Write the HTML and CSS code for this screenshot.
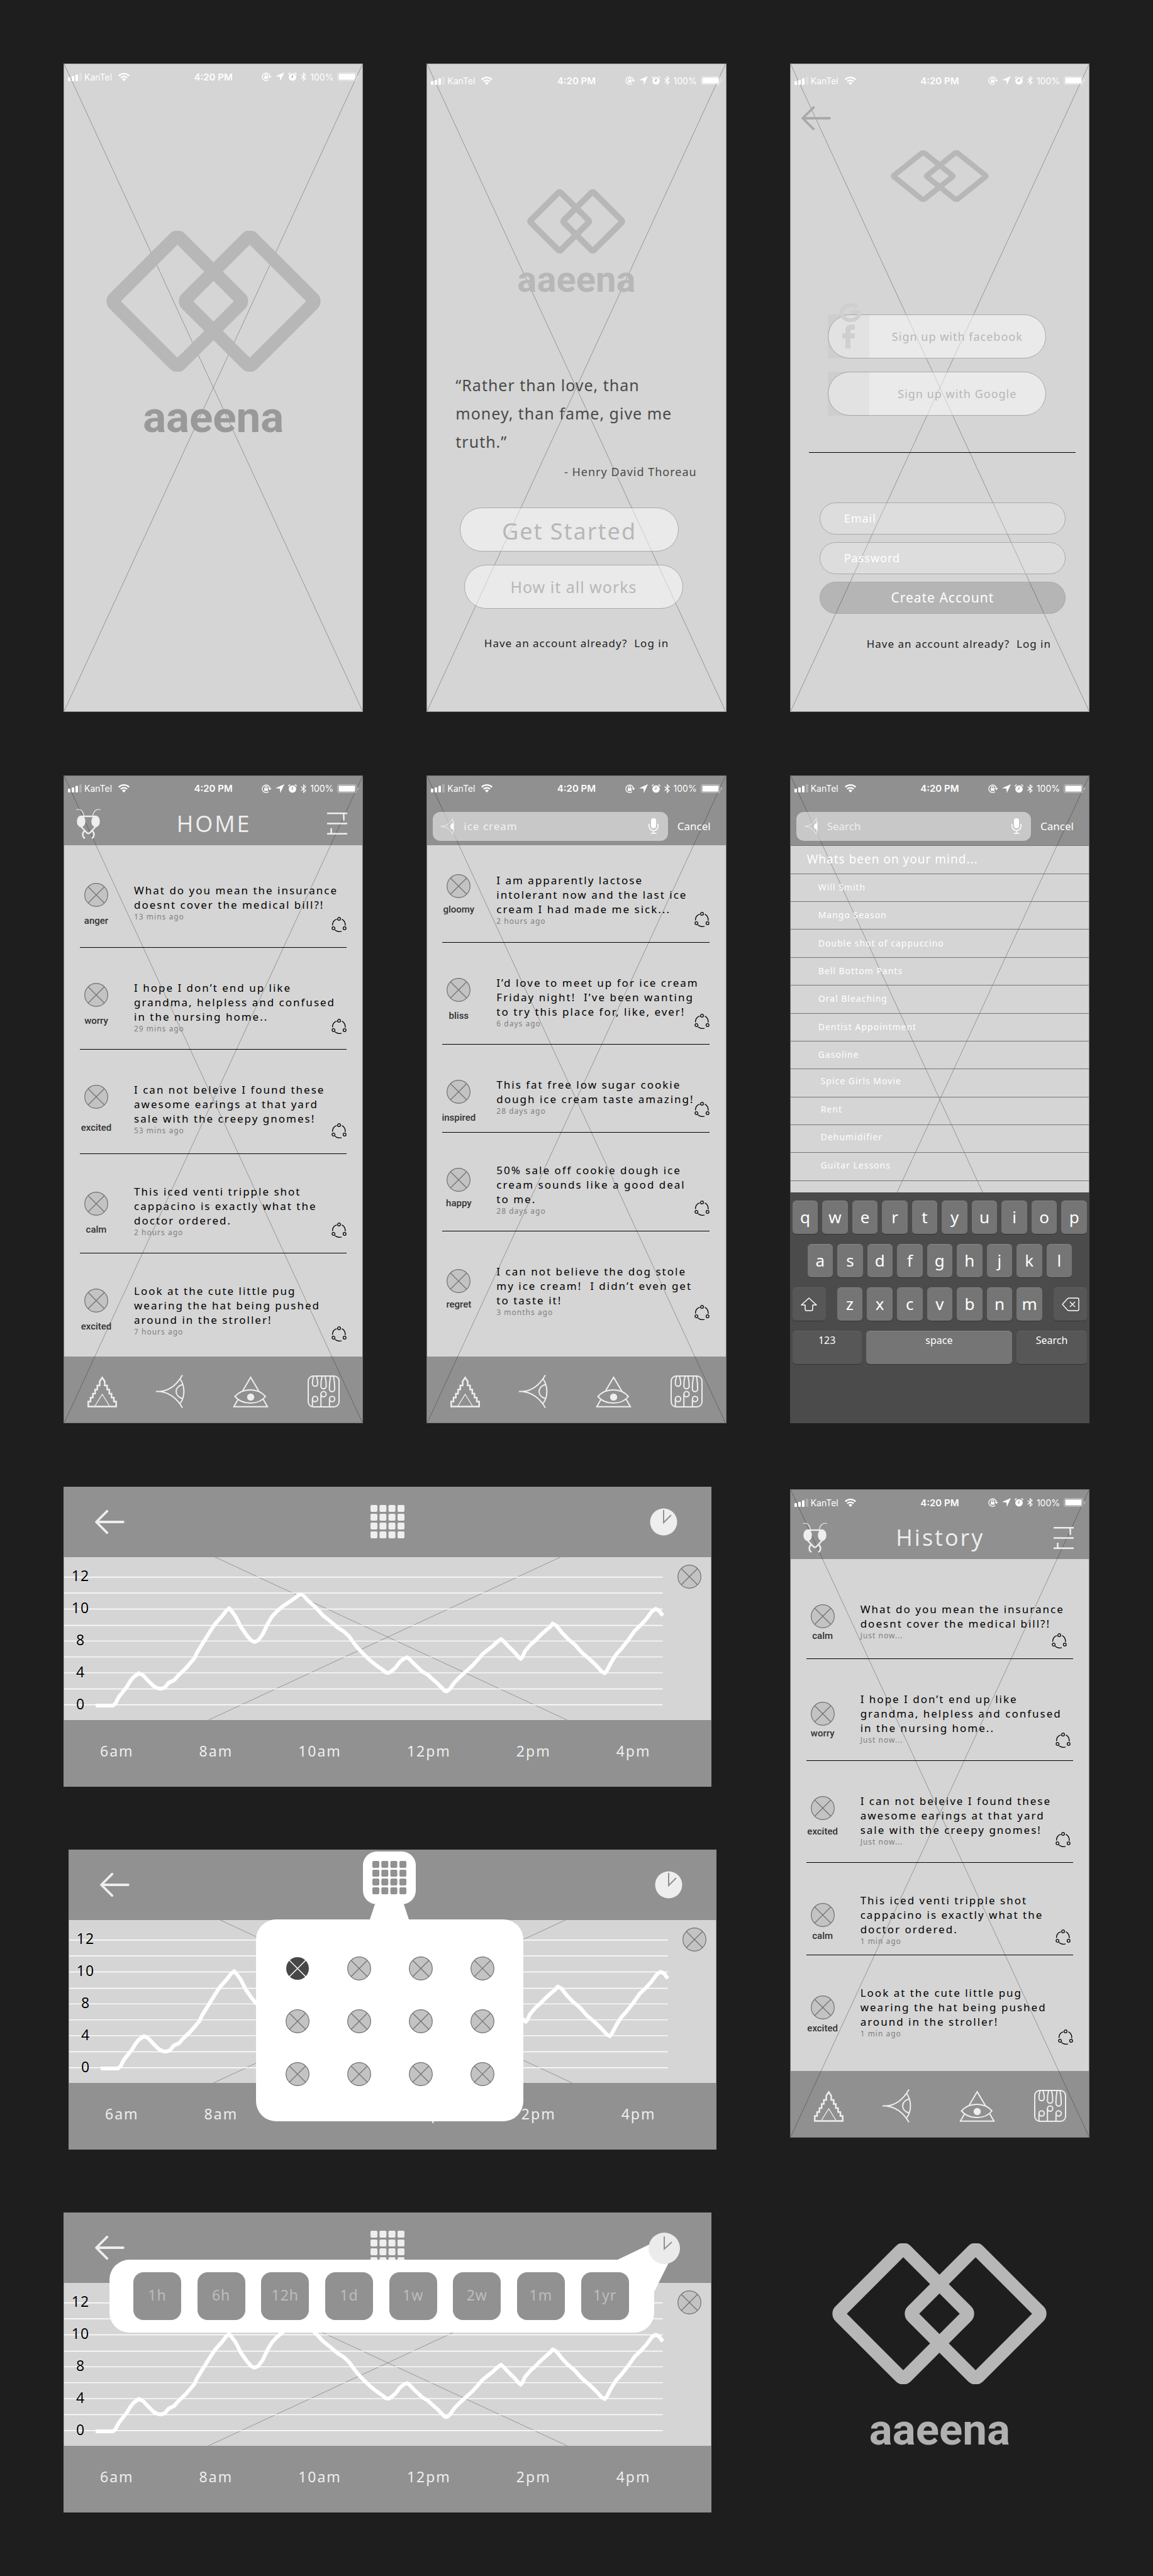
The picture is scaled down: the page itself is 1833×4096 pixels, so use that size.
FILE: index.html
```html
<!DOCTYPE html>
<html lang="en">
<head>
<meta charset="utf-8">
<meta name="viewport" content="width=device-width, initial-scale=1">
<title>aaeena – wireframes</title>
<link rel="stylesheet" href="styles.css">
</head>
<body>

<svg class="sprite" width="0" height="0" aria-hidden="true">
  <symbol id="logo" viewBox="0 0 341 224" preserveAspectRatio="none">
    <g fill="none" stroke="currentColor" stroke-width="21">
      <rect x="39" y="38" width="148" height="148" rx="6" transform="rotate(45 113 112)"/>
      <rect x="154" y="38" width="148" height="148" rx="6" transform="rotate(45 228 112)"/>
    </g>
  </symbol>
  <symbol id="cross" viewBox="0 0 100 100" preserveAspectRatio="none">
    <path d="M0 0L100 100M100 0L0 100" fill="none" stroke="#969696" stroke-width="1" vector-effect="non-scaling-stroke"/>
  </symbol>
  <symbol id="signal" viewBox="0 0 22 13">
    <g fill="#fff"><rect x="0" y="7" width="4" height="6" rx="1"/><rect x="6" y="5" width="4" height="8" rx="1"/><rect x="12" y="2.500" width="4" height="10.500" rx="1"/><rect x="18" y="0" width="4" height="13" rx="1" opacity=".25"/></g>
  </symbol>
  <symbol id="wifi" viewBox="0 0 18 13">
    <g fill="none" stroke="#fff" stroke-width="2.200"><path d="M.8 4.600A11.600 11.600 0 0 1 17.200 4.600"/><path d="M3.800 7.700A7.500 7.500 0 0 1 14.200 7.700"/></g><path d="M5.900 9.900A4.400 4.400 0 0 1 12.100 9.900L9 13z" fill="#fff"/>
  </symbol>
  <symbol id="lock" viewBox="0 0 16 14">
    <g fill="none" stroke="#fff" stroke-width="1.300"><path d="M11 11.700A6 6 0 1 1 12.900 6.500"/><path d="M5.300 6.500V5a1.700 1.700 0 0 1 3.400 0v1.500"/></g><rect x="4" y="6.200" width="6" height="4.300" rx=".6" fill="#fff"/><path d="M10.400 6.200h5.200L13 9.500z" fill="#fff"/>
  </symbol>
  <symbol id="arrow" viewBox="0 0 14 14"><path d="M14 0L7.600 14 7 7 0 6.200z" fill="#fff"/></symbol>
  <symbol id="alarm" viewBox="0 0 14 14">
    <circle cx="7" cy="7.600" r="5.900" fill="#fff"/><path d="M7 4v4H4.500" fill="none" stroke="#999" stroke-width="1.200"/><path d="M.7 3.500Q1 1 3.600.9M13.300 3.500Q13 1 10.400.9" fill="none" stroke="#fff" stroke-width="1.300"/>
  </symbol>
  <symbol id="bluetooth" viewBox="0 0 9 14"><path d="M.6 3.700L8 10 4.600 13V1L8 4 .6 10.300" fill="none" stroke="#fff" stroke-width="1.200"/></symbol>
  <symbol id="battery" viewBox="0 0 34 14">
    <rect x=".6" y=".6" width="29.800" height="12.800" rx="3" fill="none" stroke="#fff" stroke-width="1.200" opacity=".4"/><rect x="2.500" y="2.300" width="26" height="9.400" rx="1.200" fill="#fff"/><path d="M32 4.500q2 .6 2 2.500t-2 2.500z" fill="#fff" opacity=".4"/>
  </symbol>
  <symbol id="bug" viewBox="0 0 39 48">
    <ellipse cx="8" cy="20" rx="6.800" ry="9.200" fill="currentColor"/><ellipse cx="31" cy="20" rx="6.800" ry="9.200" fill="currentColor"/>
    <g fill="none" stroke="currentColor" stroke-width="2.400"><path d="M8 12h23"/><path d="M8 28.500L17.500 38.500q2 1.600 4 0L31 28.500"/><path d="M13.500 35C9.500 38 9.500 44.500 14 47M25.500 35C29.500 38 29.500 44.500 25 47"/></g>
    <path d="M.3 1.500C7-.5 11 3.500 12.500 11M38.700 1.500C32-.5 28 3.500 26.500 11" fill="none" stroke="currentColor" stroke-width="1.200"/>
  </symbol>
  <symbol id="sliders" viewBox="0 0 32 35">
    <g fill="none" stroke="currentColor" stroke-width="2.500"><path d="M0 1.300h32M0 17.500h32M0 33.700h32"/><path d="M26.500 1v11.500M6.500 25v8.500"/></g>
  </symbol>
  <symbol id="token" viewBox="0 0 38 38">
    <circle cx="19" cy="19" r="18.300" fill="#c3c3c3" stroke="#707070" stroke-width="1.200"/><path d="M6 6L32 32M32 6L6 32" stroke="#707070" stroke-width="1.200"/>
  </symbol>
  <symbol id="token-dark" viewBox="0 0 38 38">
    <circle cx="19" cy="19" r="18" fill="#474747"/><path d="M6 6L32 32M32 6L6 32" stroke="#fff" stroke-width="1.500"/>
  </symbol>
  <symbol id="share" viewBox="0 0 24 24">
    <g fill="none" stroke="#000" stroke-width="1.300"><circle cx="12" cy="3" r="2.300"/><circle cx="3.200" cy="18" r="2.300"/><circle cx="20.800" cy="18" r="2.300"/><path d="M1.600 13.500C1.500 8.500 4 5 8.400 3.600M16.500 3.600C20 5.500 22.200 9 21.800 14M5.500 20.800C8.500 23.300 13 23.800 16 22.800"/></g>
  </symbol>
  <symbol id="pyramid" viewBox="0 0 47 50">
    <path d="M1.300 48.500V40.500H5V34.300H8.700V28H12.200V21.500H15.700V15H19.500V8.500L23.500 2.500 27.500 8.500V15H31.300V21.500H34.800V28H38.300V34.300H42V40.500H45.700V48.500z" fill="none" stroke="currentColor" stroke-width="2.500"/><path d="M12 47.500L23.500 29 35 47.500" fill="none" stroke="currentColor" stroke-width="1.400"/>
  </symbol>
  <symbol id="eye" viewBox="0 0 47 53">
    <g fill="none" stroke="currentColor" stroke-width="2"><path d="M0 26.500H5C20 26 33 16 42 .5M5 26.500C20 28 33 37 42 52.500"/><path d="M38 6C46.500 18 46.500 35 38 46"/><path d="M42.500 15.500C28.500 19 28.500 34 42.500 38"/></g>
  </symbol>
  <symbol id="eye-small" viewBox="0 0 21 28">
    <path d="M0 14C9 14 15 8 19.500.5M0 14C9 14 15 20 19.500 27.500" fill="none" stroke="#eee" stroke-width="1"/><path d="M18 3C22 10 22 18 18 25" fill="none" stroke="#eee" stroke-width="1.200"/><path d="M20 8.500C13 10 13 18 20 19.500z" fill="#fff"/>
  </symbol>
  <symbol id="seer" viewBox="0 0 57 50">
    <g fill="none" stroke="currentColor" stroke-width="2"><path d="M15.500 24L28.500 2 41.500 24"/><path d="M3.500 32.500C16 18.500 40 18.500 52 32.500C41 46.500 15 46.500 3.500 32.500z"/><path d="M8.500 37L1.800 48.800H55.200L48.500 37"/></g><circle cx="28.500" cy="33.500" r="5.700" fill="currentColor"/>
  </symbol>
  <symbol id="garden" viewBox="0 0 51 51">
    <g fill="none" stroke="currentColor" stroke-width="2"><rect x="1" y="1" width="49" height="49" rx="8"/><path d="M9.500 1.500Q7.500 8 7.700 13a4.200 4.200 0 0 0 8.400 0Q16.200 8 14.300 1.500M23 1.500Q21 9 21.200 17a4.200 4.200 0 0 0 8.400 0Q29.700 9 27.800 1.500M36.500 1.500Q34.500 12 34.700 21.500a4.200 4.200 0 0 0 8.400 0Q43.200 12 41.300 1.500"/><circle cx="12" cy="37.500" r="4.200"/><circle cx="25.400" cy="29.700" r="4.200"/><circle cx="39" cy="37.500" r="4.200"/><path d="M7.700 37.500V50M21.200 29.700V50M34.800 37.500V50"/></g>
  </symbol>
  <symbol id="mic" viewBox="0 0 16 25">
    <rect x="4" y="0" width="8" height="16" rx="4" fill="#fff"/><g fill="none" stroke="#fff" stroke-width="1.600"><path d="M.8 9v3.500a7.200 7.200 0 0 0 14.400 0V9M8 19.500v4.500M3.500 24h9"/></g>
  </symbol>
  <symbol id="back" viewBox="0 0 50 40">
    <path d="M21 2L3 20 21 38M3 20H48" fill="none" stroke="currentColor" stroke-width="4" stroke-linecap="round" stroke-linejoin="round"/>
  </symbol>
  <symbol id="tiles" viewBox="0 0 54 54">
    <g fill="currentColor"><path id="tile-row" d="M2 0h7q2 0 2 2v7q0 2-2 2H2q-2 0-2-2V2Q0 0 2 0zM16.300 0h7q2 0 2 2v7q0 2-2 2h-7q-2 0-2-2V2q0-2 2-2zM30.600 0h7q2 0 2 2v7q0 2-2 2h-7q-2 0-2-2V2q0-2 2-2zM45 0h7q2 0 2 2v7q0 2-2 2h-7q-2 0-2-2V2q0-2 2-2z"/><use href="#tile-row" y="14"/><use href="#tile-row" y="28"/><use href="#tile-row" y="42"/></g>
  </symbol>
  <symbol id="clock" viewBox="0 0 44 44">
    <circle cx="22" cy="22" r="21.500" fill="#eee"/><path d="M22 3V23L34 11" fill="none" stroke="#919191" stroke-width="2"/>
  </symbol>
  <symbol id="plot" viewBox="18 398 1515 800" preserveAspectRatio="none">
    <g fill="none" vector-effect="non-scaling-stroke">
      <path d="M372 398L1197 1198M1181 398L356 1198" stroke="#969696" stroke-width="1" vector-effect="non-scaling-stroke"/>
      <path d="M18 496H1421M18 574H1421M18 653H1421M18 733H1421M18 810H1421M18 888H1421M18 966H1421M18 1045H1421M18 1123H1421" stroke="#fff" stroke-width="1.400" vector-effect="non-scaling-stroke"/>
      <polyline stroke="#fff" stroke-width="6" stroke-linejoin="round" vector-effect="non-scaling-stroke" points="92,1127 132,1127 138,1118 146,1085 165,1035 172,1010 180,988 193,968 203,978 215,1005 227,1030 237,1042 245,1044 254,1038 263,1015 276,1002 285,980 303,944 319,905 323,895 329,868 340,830 352,790 363,753 372,725 388,688 398,660 405,649 411,665 420,690 432,740 447,785 457,808 464,814 472,808 483,778 495,725 505,690 516,665 530,640 550,612 560,597 567,585 573,581 580,590 590,612 605,640 615,662 625,685 640,710 660,745 675,765 687,790 697,820 707,846 720,875 735,905 750,930 765,952 772,965 779,966 787,955 795,940 805,912 814,897 822,890 828,900 838,922 850,945 857,960 870,975 880,995 893,1018 903,1040 910,1055 915,1057 922,1045 932,1015 945,987 958,962 975,930 990,895 998,875 1010,855 1022,835 1032,815 1042,800 1050,815 1060,838 1072,862 1083,888 1088,898 1092,888 1098,860 1110,830 1122,808 1135,780 1150,752 1158,738 1163,724 1172,735 1185,770 1200,802 1215,828 1232,868 1250,900 1265,930 1278,960 1285,968 1290,955 1300,915 1312,875 1325,845 1340,805 1355,760 1370,730 1383,700 1395,665 1404,652 1412,660 1421,685"/>
    </g>
  </symbol>
</svg>

<main class="board">

  <section class="phone" aria-label="Splash">
    <svg class="cross"><use href="#cross"/></svg>
    <div class="status">
      <svg class="signal"><use href="#signal"/></svg><span class="carrier">KanTel</span><svg class="wifi"><use href="#wifi"/></svg>
      <strong class="clock-text">4:20 PM</strong>
      <span class="status-end"><svg class="lock"><use href="#lock"/></svg><svg class="arrow"><use href="#arrow"/></svg><svg class="alarm"><use href="#alarm"/></svg><svg class="bluetooth"><use href="#bluetooth"/></svg><span>100%</span><svg class="battery"><use href="#battery"/></svg></span>
    </div>
    <div class="brand brand--splash">
      <svg class="logo logo--large"><use href="#logo"/></svg>
      <h1 class="wordmark">aaeena</h1>
    </div>
  </section>

  <section class="phone" aria-label="Welcome">
    <svg class="cross"><use href="#cross"/></svg>
    <div class="status status--low">
      <svg class="signal"><use href="#signal"/></svg><span class="carrier">KanTel</span><svg class="wifi"><use href="#wifi"/></svg>
      <strong class="clock-text">4:20 PM</strong>
      <span class="status-end"><svg class="lock"><use href="#lock"/></svg><svg class="arrow"><use href="#arrow"/></svg><svg class="alarm"><use href="#alarm"/></svg><svg class="bluetooth"><use href="#bluetooth"/></svg><span>100%</span><svg class="battery"><use href="#battery"/></svg></span>
    </div>
    <div class="brand brand--welcome">
      <svg class="logo logo--medium"><use href="#logo"/></svg>
      <p class="wordmark wordmark--small">aaeena</p>
    </div>
    <blockquote class="quote">
      <p>“Rather than love, than<br>money, than fame, give me<br>truth.”</p>
      <footer>- Henry David Thoreau</footer>
    </blockquote>
    <div class="welcome-actions">
      <button class="pill pill--start" type="button">Get Started</button>
      <button class="pill pill--how" type="button">How it all works</button>
    </div>
    <p class="login">Have an account already?&nbsp; <a href="#login">Log in</a></p>
  </section>

  <section class="phone" aria-label="Sign up">
    <svg class="cross"><use href="#cross"/></svg>
    <div class="status status--low">
      <svg class="signal"><use href="#signal"/></svg><span class="carrier">KanTel</span><svg class="wifi"><use href="#wifi"/></svg>
      <strong class="clock-text">4:20 PM</strong>
      <span class="status-end"><svg class="lock"><use href="#lock"/></svg><svg class="arrow"><use href="#arrow"/></svg><svg class="alarm"><use href="#alarm"/></svg><svg class="bluetooth"><use href="#bluetooth"/></svg><span>100%</span><svg class="battery"><use href="#battery"/></svg></span>
    </div>
    <button class="back-button" type="button" aria-label="Back"><svg class="back"><use href="#back"/></svg></button>
    <svg class="logo logo--flat"><use href="#logo"/></svg>
    <div class="social">
      <button class="pill pill--social" type="button"><span class="social-mark"><svg class="mark-f" viewBox="0 0 20 38"><path d="M5 38V22H0V14H5V10Q5 0 14 0H20V8H16Q13 8 13 11V14H20L19 22H13V38z" fill="#cfcfcf"/></svg></span><span class="social-label">Sign up with facebook</span></button>
      <button class="pill pill--social" type="button"><span class="social-mark"></span><span class="social-label">Sign up with Google</span></button>
      <svg class="mark-g" viewBox="0 0 36 30"><path d="M28.500 6Q24 3 18 3A14.500 12 0 1 0 32 14.500H18" fill="none" stroke="#cfcfcf" stroke-width="6"/></svg>
    </div>
    <hr class="divider">
    <form class="signup">
      <label class="field">Email<input type="email"></label>
      <label class="field">Password<input type="password"></label>
      <button class="field field--submit" type="button">Create Account</button>
    </form>
    <p class="login login--end">Have an account already?&nbsp; <a href="#login">Log in</a></p>
  </section>

  <section class="phone phone--app" aria-label="Home">
    <svg class="cross"><use href="#cross"/></svg>
    <header class="bar">
      <div class="status">
        <svg class="signal"><use href="#signal"/></svg><span class="carrier">KanTel</span><svg class="wifi"><use href="#wifi"/></svg>
        <strong class="clock-text">4:20 PM</strong>
        <span class="status-end"><svg class="lock"><use href="#lock"/></svg><svg class="arrow"><use href="#arrow"/></svg><svg class="alarm"><use href="#alarm"/></svg><svg class="bluetooth"><use href="#bluetooth"/></svg><span>100%</span><svg class="battery"><use href="#battery"/></svg></span>
      </div>
      <div class="nav">
        <button type="button" aria-label="Profile"><svg class="bug"><use href="#bug"/></svg></button>
        <h2>HOME</h2>
        <button type="button" aria-label="Filters"><svg class="sliders"><use href="#sliders"/></svg></button>
      </div>
    </header>
    <ul class="feed feed--home">
      <li class="post"><div class="mood"><svg class="token"><use href="#token"/></svg><span>anger</span></div><div class="post-body"><p>What do you mean the insurance<br>doesnt cover the medical bill?!</p><small>13 mins ago</small></div><button class="share" type="button" aria-label="Share"><svg><use href="#share"/></svg></button></li>
      <li class="post"><div class="mood"><svg class="token"><use href="#token"/></svg><span>worry</span></div><div class="post-body"><p>I hope I don’t end up like<br>grandma, helpless and confused<br>in the nursing home..</p><small>29 mins ago</small></div><button class="share" type="button" aria-label="Share"><svg><use href="#share"/></svg></button></li>
      <li class="post"><div class="mood"><svg class="token"><use href="#token"/></svg><span>excited</span></div><div class="post-body"><p>I can not beleive I found these<br>awesome earings at that yard<br>sale with the creepy gnomes!</p><small>53 mins ago</small></div><button class="share" type="button" aria-label="Share"><svg><use href="#share"/></svg></button></li>
      <li class="post"><div class="mood"><svg class="token"><use href="#token"/></svg><span>calm</span></div><div class="post-body"><p>This iced venti tripple shot<br>cappacino is exactly what the<br>doctor ordered.</p><small>2 hours ago</small></div><button class="share" type="button" aria-label="Share"><svg><use href="#share"/></svg></button></li>
      <li class="post"><div class="mood"><svg class="token"><use href="#token"/></svg><span>excited</span></div><div class="post-body"><p>Look at the cute little pug<br>wearing the hat being pushed<br>around in the stroller!</p><small>7 hours ago</small></div><button class="share" type="button" aria-label="Share"><svg><use href="#share"/></svg></button></li>
    </ul>
    <nav class="tabs">
      <a href="#home" aria-label="Home"><svg class="pyramid"><use href="#pyramid"/></svg></a>
      <a href="#search" class="tab-eye" aria-label="Search"><svg class="eye"><use href="#eye"/></svg></a>
      <a href="#history" aria-label="History"><svg class="seer"><use href="#seer"/></svg></a>
      <a href="#garden" aria-label="Garden"><svg class="garden"><use href="#garden"/></svg></a>
    </nav>
  </section>

  <section class="phone phone--app" aria-label="Search results">
    <svg class="cross"><use href="#cross"/></svg>
    <header class="bar">
      <div class="status">
        <svg class="signal"><use href="#signal"/></svg><span class="carrier">KanTel</span><svg class="wifi"><use href="#wifi"/></svg>
        <strong class="clock-text">4:20 PM</strong>
        <span class="status-end"><svg class="lock"><use href="#lock"/></svg><svg class="arrow"><use href="#arrow"/></svg><svg class="alarm"><use href="#alarm"/></svg><svg class="bluetooth"><use href="#bluetooth"/></svg><span>100%</span><svg class="battery"><use href="#battery"/></svg></span>
      </div>
      <div class="searchbar">
        <div class="searchbox"><svg class="eye-small"><use href="#eye-small"/></svg><input class="spaced" type="text" value="ice cream" aria-label="Search"><svg class="mic"><use href="#mic"/></svg></div>
        <button type="button">Cancel</button>
      </div>
    </header>
    <ul class="feed feed--search">
      <li class="post"><div class="mood"><svg class="token"><use href="#token"/></svg><span>gloomy</span></div><div class="post-body"><p>I am apparently lactose<br>intolerant now and the last ice<br>cream I had made me sick...</p><small>2 hours ago</small></div><button class="share" type="button" aria-label="Share"><svg><use href="#share"/></svg></button></li>
      <li class="post"><div class="mood"><svg class="token"><use href="#token"/></svg><span>bliss</span></div><div class="post-body"><p>I’d love to meet up for ice cream<br>Friday night!&nbsp; I’ve been wanting<br>to try this place for, like, ever!</p><small>6 days ago</small></div><button class="share" type="button" aria-label="Share"><svg><use href="#share"/></svg></button></li>
      <li class="post"><div class="mood"><svg class="token"><use href="#token"/></svg><span>inspired</span></div><div class="post-body"><p>This fat free low sugar cookie<br>dough ice cream taste amazing!</p><small>28 days ago</small></div><button class="share" type="button" aria-label="Share"><svg><use href="#share"/></svg></button></li>
      <li class="post"><div class="mood"><svg class="token"><use href="#token"/></svg><span>happy</span></div><div class="post-body"><p>50% sale off cookie dough ice<br>cream sounds like a good deal<br>to me.</p><small>28 days ago</small></div><button class="share" type="button" aria-label="Share"><svg><use href="#share"/></svg></button></li>
      <li class="post"><div class="mood"><svg class="token"><use href="#token"/></svg><span>regret</span></div><div class="post-body"><p>I can not believe the dog stole<br>my ice cream!&nbsp; I didn’t even get<br>to taste it!</p><small>3 months ago</small></div><button class="share" type="button" aria-label="Share"><svg><use href="#share"/></svg></button></li>
    </ul>
    <nav class="tabs">
      <a href="#home" aria-label="Home"><svg class="pyramid"><use href="#pyramid"/></svg></a>
      <a href="#search" class="tab-eye" aria-label="Search"><svg class="eye"><use href="#eye"/></svg></a>
      <a href="#history" aria-label="History"><svg class="seer"><use href="#seer"/></svg></a>
      <a href="#garden" aria-label="Garden"><svg class="garden"><use href="#garden"/></svg></a>
    </nav>
  </section>

  <section class="phone phone--app" aria-label="Search">
    <svg class="cross"><use href="#cross"/></svg>
    <header class="bar">
      <div class="status">
        <svg class="signal"><use href="#signal"/></svg><span class="carrier">KanTel</span><svg class="wifi"><use href="#wifi"/></svg>
        <strong class="clock-text">4:20 PM</strong>
        <span class="status-end"><svg class="lock"><use href="#lock"/></svg><svg class="arrow"><use href="#arrow"/></svg><svg class="alarm"><use href="#alarm"/></svg><svg class="bluetooth"><use href="#bluetooth"/></svg><span>100%</span><svg class="battery"><use href="#battery"/></svg></span>
      </div>
      <div class="searchbar">
        <div class="searchbox"><svg class="eye-small"><use href="#eye-small"/></svg><input type="text" placeholder="Search" aria-label="Search"><svg class="mic"><use href="#mic"/></svg></div>
        <button type="button">Cancel</button>
      </div>
    </header>
    <div class="topics">
      <h2>Whats been on your mind...</h2>
      <ul>
        <li>Will Smith</li>
        <li>Mango Season</li>
        <li>Double shot of cappuccino</li>
        <li>Bell Bottom Pants</li>
        <li>Oral Bleaching</li>
        <li>Dentist Appointment</li>
        <li>Gasoline</li>
        <li class="indent">Spice Girls Movie</li>
        <li class="indent">Rent</li>
        <li class="indent">Dehumidifier</li>
        <li class="indent">Guitar Lessons</li>
      </ul>
    </div>
    <div class="keyboard">
      <div class="keys"><button type="button">q</button><button type="button">w</button><button type="button">e</button><button type="button">r</button><button type="button">t</button><button type="button">y</button><button type="button">u</button><button type="button">i</button><button type="button">o</button><button type="button">p</button></div>
      <div class="keys keys--middle"><button type="button">a</button><button type="button">s</button><button type="button">d</button><button type="button">f</button><button type="button">g</button><button type="button">h</button><button type="button">j</button><button type="button">k</button><button type="button">l</button></div>
      <div class="keys keys--lower"><button class="dark side" type="button" aria-label="Shift"><svg class="shift" viewBox="0 0 26 22"><path d="M13 1L25 12H19V18Q19 21 17 21H9Q7 21 7 18V12H1z" fill="none" stroke="#fff" stroke-width="1.500" stroke-linejoin="round"/></svg></button><span class="keys keys--letters"><button type="button">z</button><button type="button">x</button><button type="button">c</button><button type="button">v</button><button type="button">b</button><button type="button">n</button><button type="button">m</button></span><button class="dark side" type="button" aria-label="Delete"><svg class="delete" viewBox="0 0 28 22"><path d="M1 11L9 2Q10 1 12 1H25Q27 1 27 3V19Q27 21 25 21H12Q10 21 9 20zM13 7L21 15M21 7L13 15" fill="none" stroke="#fff" stroke-width="1.400" stroke-linejoin="round"/></svg></button></div>
      <div class="keys keys--bottom"><button class="dark" type="button">123</button><button type="button">space</button><button class="dark" type="button">Search</button></div>
    </div>
  </section>

  <div class="charts">
    <section class="panel" aria-label="Chart">
      <header class="panel-bar">
        <button type="button" aria-label="Back"><svg class="back"><use href="#back"/></svg></button>
        <button type="button" aria-label="Moods"><svg class="tiles"><use href="#tiles"/></svg></button>
        <button type="button" aria-label="Range"><svg class="clock"><use href="#clock"/></svg></button>
      </header>
      <div class="plot">
        <svg class="plot-art"><use href="#plot"/></svg>
        <ol class="scale"><li>12</li><li>10</li><li>8</li><li>4</li><li>0</li></ol>
        <svg class="token plot-token"><use href="#token"/></svg>
      </div>
      <footer class="hours"><span>6am</span><span>8am</span><span>10am</span><span>12pm</span><span>2pm</span><span>4pm</span></footer>
    </section>

    <section class="panel panel--shifted" aria-label="Chart with mood picker">
      <header class="panel-bar">
        <button type="button" aria-label="Back"><svg class="back"><use href="#back"/></svg></button>
        <button type="button" aria-label="Range"><svg class="clock"><use href="#clock"/></svg></button>
      </header>
      <div class="plot">
        <svg class="plot-art"><use href="#plot"/></svg>
        <ol class="scale"><li>12</li><li>10</li><li>8</li><li>4</li><li>0</li></ol>
        <svg class="token plot-token"><use href="#token"/></svg>
      </div>
      <footer class="hours"><span>6am</span><span>8am</span><span>10am</span><span>12pm</span><span>2pm</span><span>4pm</span></footer>
      <div class="picker">
        <button class="picker-tab" type="button" aria-label="Moods"><svg class="tiles"><use href="#tiles"/></svg></button>
        <svg class="picker-neck" viewBox="0 0 62 24"><path d="M8 0H54L62 24H0z" fill="#fff"/></svg>
        <div class="picker-grid">
          <button type="button" aria-label="Mood 1"><svg class="token"><use href="#token-dark"/></svg></button>
          <button type="button" aria-label="Mood 2"><svg class="token"><use href="#token"/></svg></button>
          <button type="button" aria-label="Mood 3"><svg class="token"><use href="#token"/></svg></button>
          <button type="button" aria-label="Mood 4"><svg class="token"><use href="#token"/></svg></button>
          <button type="button" aria-label="Mood 5"><svg class="token"><use href="#token"/></svg></button>
          <button type="button" aria-label="Mood 6"><svg class="token"><use href="#token"/></svg></button>
          <button type="button" aria-label="Mood 7"><svg class="token"><use href="#token"/></svg></button>
          <button type="button" aria-label="Mood 8"><svg class="token"><use href="#token"/></svg></button>
          <button type="button" aria-label="Mood 9"><svg class="token"><use href="#token"/></svg></button>
          <button type="button" aria-label="Mood 10"><svg class="token"><use href="#token"/></svg></button>
          <button type="button" aria-label="Mood 11"><svg class="token"><use href="#token"/></svg></button>
          <button type="button" aria-label="Mood 12"><svg class="token"><use href="#token"/></svg></button>
        </div>
      </div>
    </section>

    <section class="panel" aria-label="Chart with range picker">
      <header class="panel-bar">
        <button type="button" aria-label="Back"><svg class="back"><use href="#back"/></svg></button>
        <button type="button" aria-label="Moods"><svg class="tiles"><use href="#tiles"/></svg></button>
        <span class="clock-slot"></span>
      </header>
      <div class="plot">
        <svg class="plot-art"><use href="#plot"/></svg>
        <ol class="scale"><li>12</li><li>10</li><li>8</li><li>4</li><li>0</li></ol>
        <svg class="token plot-token"><use href="#token"/></svg>
      </div>
      <footer class="hours"><span>6am</span><span>8am</span><span>10am</span><span>12pm</span><span>2pm</span><span>4pm</span></footer>
      <div class="ranges">
        <button type="button">1h</button><button type="button">6h</button><button type="button">12h</button><button type="button">1d</button><button type="button">1w</button><button type="button">2w</button><button type="button">1m</button><button type="button">1yr</button>
        <svg class="ranges-pointer" viewBox="0 0 110 110"><path d="M6 46L60 20 89 50 65 98z" fill="#fff"/><circle cx="82" cy="27" r="25" fill="#ebebeb"/><path d="M82 8V28L94 17" fill="none" stroke="#919191" stroke-width="2"/></svg>
      </div>
    </section>
  </div>

  <div class="side-column">
    <section class="phone phone--app" aria-label="History">
      <svg class="cross"><use href="#cross"/></svg>
      <header class="bar">
        <div class="status">
          <svg class="signal"><use href="#signal"/></svg><span class="carrier">KanTel</span><svg class="wifi"><use href="#wifi"/></svg>
          <strong class="clock-text">4:20 PM</strong>
          <span class="status-end"><svg class="lock"><use href="#lock"/></svg><svg class="arrow"><use href="#arrow"/></svg><svg class="alarm"><use href="#alarm"/></svg><svg class="bluetooth"><use href="#bluetooth"/></svg><span>100%</span><svg class="battery"><use href="#battery"/></svg></span>
        </div>
        <div class="nav">
          <button type="button" aria-label="Profile"><svg class="bug"><use href="#bug"/></svg></button>
          <h2>History</h2>
          <button type="button" aria-label="Filters"><svg class="sliders"><use href="#sliders"/></svg></button>
        </div>
      </header>
      <ul class="feed feed--history">
        <li class="post"><div class="mood"><svg class="token"><use href="#token"/></svg><span>calm</span></div><div class="post-body"><p>What do you mean the insurance<br>doesnt cover the medical bill?!</p><small>Just now...</small></div><button class="share" type="button" aria-label="Share"><svg><use href="#share"/></svg></button></li>
        <li class="post"><div class="mood"><svg class="token"><use href="#token"/></svg><span>worry</span></div><div class="post-body"><p>I hope I don’t end up like<br>grandma, helpless and confused<br>in the nursing home..</p><small>Just now...</small></div><button class="share" type="button" aria-label="Share"><svg><use href="#share"/></svg></button></li>
        <li class="post"><div class="mood"><svg class="token"><use href="#token"/></svg><span>excited</span></div><div class="post-body"><p>I can not beleive I found these<br>awesome earings at that yard<br>sale with the creepy gnomes!</p><small>Just now...</small></div><button class="share" type="button" aria-label="Share"><svg><use href="#share"/></svg></button></li>
        <li class="post"><div class="mood"><svg class="token"><use href="#token"/></svg><span>calm</span></div><div class="post-body"><p>This iced venti tripple shot<br>cappacino is exactly what the<br>doctor ordered.</p><small>1 min ago</small></div><button class="share" type="button" aria-label="Share"><svg><use href="#share"/></svg></button></li>
        <li class="post"><div class="mood"><svg class="token"><use href="#token"/></svg><span>excited</span></div><div class="post-body"><p>Look at the cute little pug<br>wearing the hat being pushed<br>around in the stroller!</p><small>1 min ago</small></div><button class="share" type="button" aria-label="Share"><svg><use href="#share"/></svg></button></li>
      </ul>
      <nav class="tabs">
        <a href="#home" aria-label="Home"><svg class="pyramid"><use href="#pyramid"/></svg></a>
        <a href="#search" class="tab-eye" aria-label="Search"><svg class="eye"><use href="#eye"/></svg></a>
        <a href="#history" aria-label="History"><svg class="seer"><use href="#seer"/></svg></a>
        <a href="#garden" aria-label="Garden"><svg class="garden"><use href="#garden"/></svg></a>
      </nav>
    </section>
    <div class="brand brand--footer">
      <svg class="logo logo--large"><use href="#logo"/></svg>
      <p class="wordmark">aaeena</p>
    </div>
  </div>

</main>
</body>
</html>
```
FILE: styles.css
```css
*,
*::before,
*::after {
  box-sizing: border-box;
}

body {
  margin: 0;
  background: #1e1e1e;
  color: #000;
  font-family: "Noto Sans", "Open Sans", sans-serif;
  font-size: 18px;
}

h1, h2, p, ul, ol, blockquote {
  margin: 0;
  padding: 0;
  font-weight: 400;
}

ul, ol {
  list-style: none;
}

button, input {
  margin: 0;
  padding: 0;
  border: 0;
  background: none;
  color: inherit;
  font: inherit;
  letter-spacing: inherit;
}

a {
  color: inherit;
  text-decoration: none;
}

svg {
  display: block;
  flex: none;
}

.sprite {
  position: absolute;
}

/* Board */

.board {
  display: grid;
  grid-template-columns: repeat(3, minmax(0, 1fr));
  gap: 101px;
  align-items: start;
  padding: 101px;
}

.charts {
  display: flex;
  flex-direction: column;
  grid-column: span 2;
  gap: 100px;
  padding-right: 24px;
}

.side-column {
  padding-top: 4px;
}

/* Phone frame */

.phone {
  position: relative;
  display: flex;
  flex-direction: column;
  aspect-ratio: 476 / 1030;
  border: 1px solid #969696;
  background: #d5d5d5;
}

.phone--app {
  border-color: #757575;
}

.phone > * {
  position: relative;
}

.phone > .cross {
  position: absolute;
  inset: 0;
  width: 100%;
  height: 100%;
}

.status {
  position: relative;
  display: grid;
  grid-template-columns: auto auto 1fr auto auto;
  align-items: center;
  height: 40px;
  padding: 0 6px;
  color: #fff;
  font-family: Inter, sans-serif;
  font-size: 14px;
}

.status--low {
  height: 52px;
}

.signal { width: 22px; height: 13px; }
.wifi { width: 18px; height: 13px; }
.lock { width: 16px; height: 14px; }
.arrow { width: 14px; height: 14px; }
.alarm { width: 14px; height: 14px; }
.bluetooth { width: 9px; height: 14px; }
.battery { width: 34px; height: 14px; }

.carrier {
  margin: 0 10px 0 4px;
}

.clock-text {
  position: absolute;
  inset: 0;
  margin: auto;
  width: max-content;
  height: max-content;
  font-weight: 600;
  font-size: 15px;
}

.status-end {
  display: flex;
  align-items: center;
  gap: 6px;
}

/* Brand */

.brand {
  display: flex;
  flex-direction: column;
  align-items: center;
  color: #b7b7b7;
}

.brand--splash { margin-top: 225px; }
.brand--welcome { margin-top: 147px; }
.brand--footer { margin-top: 168px; }

.logo {
  align-self: center;
  color: #b7b7b7;
}

.logo--large { width: 341px; height: 224px; }
.logo--medium { width: 156px; height: 102px; }
.logo--flat { width: 156px; height: 82px; margin-top: 32px; }

.wordmark {
  margin-top: 38px;
  color: #999;
  font-family: Roboto, sans-serif;
  font-weight: 700;
  font-size: 69px;
  line-height: 70px;
}

.brand--footer .wordmark {
  color: #b0b0b0;
}

.wordmark--small {
  margin-top: 12px;
  color: #b7b7b7;
  font-size: 58px;
  line-height: 58px;
}

/* Welcome */

.quote {
  margin: 117px 46px 0 45px;
  color: #4a4a4a;
}

.quote p {
  font-size: 25px;
  line-height: 45px;
  letter-spacing: 1px;
}

.quote footer {
  margin-top: 13px;
  font-size: 18px;
  line-height: 24px;
  letter-spacing: 1px;
  text-align: right;
}

.welcome-actions {
  display: flex;
  flex-direction: column;
  gap: 21px;
  padding: 0 52px;
  margin-top: 45px;
}

.pill {
  height: 70px;
  border: 1px solid #aaa;
  border-radius: 35px;
  background: rgba(255, 255, 255, .5);
  color: #b7b7b7;
  letter-spacing: 1px;
}

.pill--start {
  margin-right: 23px;
  padding-top: 4px;
  font-size: 36px;
  letter-spacing: 2px;
}

.pill--how {
  margin-left: 7px;
  margin-right: 16px;
  font-size: 25px;
}

.login {
  margin-top: 43px;
  color: #222;
  font-size: 17px;
  line-height: 24px;
  letter-spacing: 1px;
  text-align: center;
}

.login--end {
  margin: 36px 60px 0 0;
  text-align: right;
}

/* Sign up */

.back-button {
  align-self: flex-start;
  margin: 15px 0 0 15px;
  color: #a9a9a9;
}

.back {
  width: 50px;
  height: 38px;
}

.social {
  display: flex;
  flex-direction: column;
  gap: 21px;
  margin: 179px 68px 0 59px;
}

.pill--social {
  display: flex;
  align-items: center;
}

.social-mark {
  display: flex;
  align-items: flex-end;
  justify-content: center;
  width: 66px;
  height: 70px;
  margin: 0 0 0 -1px;
  padding-bottom: 16px;
  background: rgba(0, 0, 0, .03);
}

.social-label {
  flex: 1;
}

.mark-f {
  width: 20px;
  height: 38px;
}

.mark-g {
  position: absolute;
  left: 18px;
  top: -18px;
  width: 37px;
  height: 30px;
}

.divider {
  width: auto;
  margin: 58px 21px 0 29px;
  border: 0;
  border-top: 1px solid #000;
}

.signup {
  display: flex;
  flex-direction: column;
  gap: 12px;
  margin: 79px 37px 0 46px;
}

.field {
  display: flex;
  align-items: center;
  gap: 12px;
  height: 51px;
  padding: 0 38px 2px;
  border: 1px solid #a9a9a9;
  border-radius: 26px;
  background: rgba(255, 255, 255, .2);
  color: #fff;
  font-size: 18px;
  letter-spacing: 1px;
}

.field input {
  flex: 1;
  min-width: 0;
}

.field--submit {
  justify-content: center;
  background: rgba(0, 0, 0, .15);
  font-size: 21px;
}

/* App header */

.bar {
  height: 111px;
  margin: -1px -1px 0;
  border: 1px solid #757575;
  border-bottom: 0;
  background: rgba(0, 0, 0, .32);
  color: #eee;
}

.nav {
  display: flex;
  align-items: center;
  justify-content: space-between;
  height: 70px;
  padding: 2px 24px 0 19px;
}

.nav h2 {
  font-family: "Open Sans", sans-serif;
  font-size: 36px;
  letter-spacing: 3px;
  line-height: 48px;
}

.bug { width: 39px; height: 48px; }
.sliders { width: 32px; height: 35px; }

.searchbar {
  display: flex;
  align-items: center;
  padding: 17px 24px 0 9px;
  color: #fff;
  font-size: 17px;
}

.searchbar button {
  width: 68px;
  text-align: right;
}

.searchbox {
  display: flex;
  flex: 1;
  align-items: center;
  min-width: 0;
  height: 46px;
  padding: 0 15px 0 13px;
  border-radius: 12px;
  background: rgba(255, 255, 255, .5);
}

.searchbox input {
  flex: 1;
  min-width: 0;
  margin-left: 15px;
  color: #f2f2f2;
}

.searchbox input::placeholder {
  color: #eee;
  opacity: 1;
}

.searchbox .spaced {
  letter-spacing: 1px;
}

.eye-small { width: 21px; height: 28px; }
.mic { width: 16px; height: 25px; }

/* Feed */

.feed {
  display: grid;
  flex: 1;
  padding: 0 25px;
}

.feed--home { grid-template-rows: 163px 162px 166px 158px 1fr; }
.feed--search { grid-template-rows: 155px 162px 140px 157px 1fr; padding: 0 26px 0 24px; }
.feed--history { grid-template-rows: 159px 162px 162px 147px 1fr; }

.post {
  --body: 52px;
  --mood: 56px;
  --gap: 12px;
  --end: 24px;
  display: grid;
  grid-template-columns: 52px 1fr;
  column-gap: 34px;
  border-bottom: 1px solid #000;
}

.post:last-child {
  border-bottom: 0;
}

.feed--home .post:nth-child(1) { --body: 60px; --mood: 60px; }
.feed--home .post:nth-child(3) { --gap: 20px; }
.feed--home .post:nth-child(4) { --body: 48px; --mood: 60px; }
.feed--home .post:nth-child(5) { --body: 48px; }

.feed--search .post:nth-child(1) { --body: 44px; --mood: 46px; --gap: 8px; }
.feed--search .post:nth-child(4) { --body: 48px; --gap: 8px; }
.feed--search .post:nth-child(5) { --mood: 60px; --gap: 8px; --end: 58px; }

.feed--history .post:nth-child(1) { --body: 68px; --mood: 72px; --gap: 2px; --end: 16px; }
.feed--history .post:nth-child(2) { --mood: 68px; --gap: 2px; --end: 20px; }
.feed--history .post:nth-child(3) { --gap: 8px; }
.feed--history .post:nth-child(4) { --body: 48px; --mood: 64px; --gap: 4px; --end: 16px; }
.feed--history .post:nth-child(5) { --body: 48px; --mood: 64px; --gap: 4px; --end: 42px; }

.mood {
  display: flex;
  flex-direction: column;
  align-items: center;
  gap: var(--gap);
  padding-top: var(--mood);
  color: #333;
  font-family: Roboto, sans-serif;
  font-weight: 500;
  font-size: 15px;
  line-height: 20px;
}

.token {
  width: 38px;
  height: 38px;
}

.post-body {
  grid-area: 1 / 2;
  padding-top: var(--body);
  white-space: nowrap;
}

.post-body p {
  font-size: 17px;
  line-height: 23px;
  letter-spacing: 2px;
}

.post-body small {
  display: block;
  color: #808080;
  font-size: 12px;
  line-height: 16px;
  letter-spacing: 1px;
}

.share {
  grid-area: 1 / 2;
  align-self: end;
  justify-self: end;
  margin-bottom: var(--end);
}

.feed--history .share { margin-right: 4px; }
.feed--history .post:first-child .share { margin-right: 10px; }
.feed--history .post:last-child .share { margin-right: 0; }

.share svg {
  width: 24px;
  height: 24px;
}

.tabs {
  display: flex;
  gap: 62px;
  align-items: center;
  height: 106px;
  margin: 0 -1px -1px;
  padding: 6px 0 0 37px;
  border: 1px solid #757575;
  border-top: 0;
  background: rgba(0, 0, 0, .32);
  color: #eee;
}

.tab-eye {
  width: 60px;
}

.pyramid { width: 47px; height: 50px; }
.eye { width: 47px; height: 53px; }
.seer { width: 57px; height: 50px; }
.garden { width: 51px; height: 51px; }

/* Search topics */

.topics {
  flex: 1;
  border-top: 1px solid #757575;
  color: #fff;
}

.topics h2,
.topics li {
  display: flex;
  align-items: center;
  padding-bottom: 2px;
  border-bottom: 1px solid #757575;
}

.topics h2 {
  height: 45px;
  padding-left: 26px;
  font-size: 19px;
  letter-spacing: 1px;
}

.topics ul {
  display: grid;
  grid-auto-rows: 1fr;
  height: 488px;
}

.topics li {
  padding-left: 44px;
  font-size: 14px;
  letter-spacing: 1px;
}

.topics .indent {
  padding-left: 48px;
  padding-bottom: 6px;
}

/* Keyboard */

.keyboard {
  display: flex;
  flex-direction: column;
  gap: 15px;
  height: 367px;
  margin: 0 -1px -1px;
  padding: 13px 4px;
  background: #4b4b4b;
  color: #fff;
}

.keys {
  display: flex;
  gap: 7px;
}

.keys button {
  flex: 1;
  min-width: 0;
  height: 54px;
  padding-bottom: 3px;
  border-top: 1px solid #868686;
  border-bottom: 1px solid #333;
  border-radius: 6px;
  background: #757575;
  font-size: 26px;
  line-height: 32px;
}

.keys .dark {
  border-top-color: #626262;
  background: #575757;
}

.keys--middle {
  padding: 0 24px;
}

.keys--lower {
  gap: 18px;
}

.keys--letters {
  flex: 1;
}

.keys--lower .side {
  display: flex;
  flex: none;
  align-items: center;
  justify-content: center;
  width: 53px;
  padding: 0;
}

.shift { width: 26px; height: 22px; }
.delete { width: 28px; height: 22px; }

.keys--bottom {
  display: grid;
  grid-template-columns: 110px 1fr 112px;
}

.keys--bottom button {
  padding-bottom: 24px;
  font-size: 16px;
  line-height: 20px;
}

/* Chart panels */

.panel {
  position: relative;
  background: #919191;
}

.panel--shifted {
  margin: 0 -8px 0 8px;
}

.panel-bar {
  display: flex;
  align-items: center;
  justify-content: space-between;
  height: 112px;
  padding: 0 54px 0 48px;
  color: #eee;
}

.tiles { width: 54px; height: 54px; }

.clock,
.clock-slot {
  width: 44px;
  height: 44px;
}

.plot {
  position: relative;
  height: 259px;
  border: 1px solid #a9a9a9;
  border-width: 0 1px;
  background: #d5d5d5;
}

.plot-art {
  width: 100%;
  height: 100%;
}

.scale {
  position: absolute;
  top: 17px;
  left: 0;
  display: flex;
  flex-direction: column;
  gap: 27px;
  width: 52px;
  font-size: 23px;
  line-height: 24px;
  letter-spacing: 1px;
  text-align: center;
  text-shadow: 0 0 2px #fff;
}

.plot-token {
  position: absolute;
  top: 12px;
  right: 15px;
}

.hours {
  display: flex;
  gap: 104px;
  align-items: center;
  height: 106px;
  padding: 0 0 8px 58px;
  color: #eee;
  font-size: 23px;
  letter-spacing: 2px;
}

/* Mood picker */

.picker {
  position: absolute;
  top: 3px;
  left: calc(50% - 217px);
  display: flex;
  flex-direction: column;
  align-items: center;
  width: 425px;
}

.picker-tab {
  padding: 15px;
  border-radius: 22px;
  background: #fff;
  color: #919191;
}

.picker-neck {
  width: 62px;
  height: 24px;
}

.picker-grid {
  display: grid;
  grid-template-columns: repeat(4, 38px);
  gap: 46px 60px;
  justify-content: center;
  width: 100%;
  padding: 59px 0 56px 2px;
  border-radius: 32px;
  background: #fff;
}

/* Range picker */

.ranges {
  position: absolute;
  top: 75px;
  left: 73px;
  right: 91px;
  display: flex;
  justify-content: space-between;
  padding: 20px 40px 20px 38px;
  border-radius: 32px;
  background: #fff;
}

.ranges button {
  width: 76px;
  height: 76px;
  padding-bottom: 4px;
  border-radius: 16px;
  background: #919191;
  color: #bdbdbd;
  font-size: 23px;
  letter-spacing: 1px;
}

.ranges-pointer {
  position: absolute;
  right: -44px;
  top: -45px;
  width: 110px;
  height: 110px;
}
```
